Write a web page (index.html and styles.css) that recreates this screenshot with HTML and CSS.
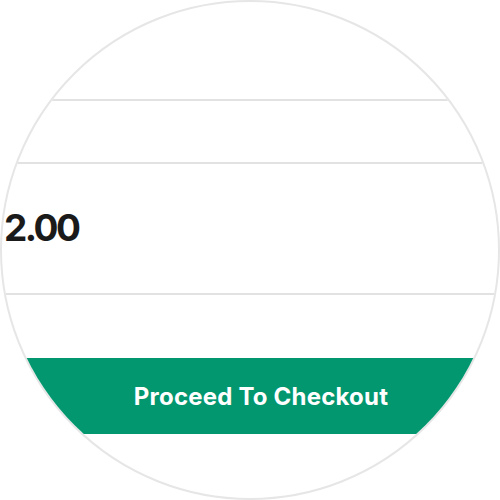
FILE: index.html
```html
<!DOCTYPE html>
<html>
<head>
<meta charset="utf-8">
<link rel="stylesheet" href="styles.css">
</head>
<body>
<div class="lens">
  <div class="row row-top"></div>
  <div class="row row-mid"></div>
  <div class="row row-total"><span class="amount">2.00</span></div>
  <div class="spacer"></div>
  <button class="checkout">Proceed To Checkout</button>
</div>
</body>
</html>
```
FILE: styles.css
```css
html, body {
  margin: 0;
  padding: 0;
  background: #ffffff;
}
.lens {
  width: 500px;
  height: 500px;
  box-sizing: border-box;
  border: 2px solid #e6e6e6;
  border-radius: 50%;
  overflow: hidden;
  display: flex;
  flex-direction: column;
  font-family: "Inter", "Open Sans", sans-serif;
}
.row {
  border-bottom: 2px solid #e2e2e2;
  flex: none;
}
.row-top { height: 97px; }
.row-mid { height: 61px; }
.row-total {
  height: 129px;
  display: flex;
  align-items: center;
  padding-left: 2px;
}
.amount {
  font-size: 37px;
  font-weight: 700;
  color: #1a1a1a;
  letter-spacing: -2.5px;
  margin-top: -2px;
}
.spacer { height: 63px; flex: none; }
.checkout {
  flex: none;
  height: 76px;
  width: 100%;
  border: none;
  background: #02976f;
  color: #ffffff;
  font-family: "Inter", "Open Sans", sans-serif;
  font-size: 24px;
  font-weight: 700;
  letter-spacing: 0.2px;
  padding: 0 0 0 22px;
  text-align: center;
}
```
